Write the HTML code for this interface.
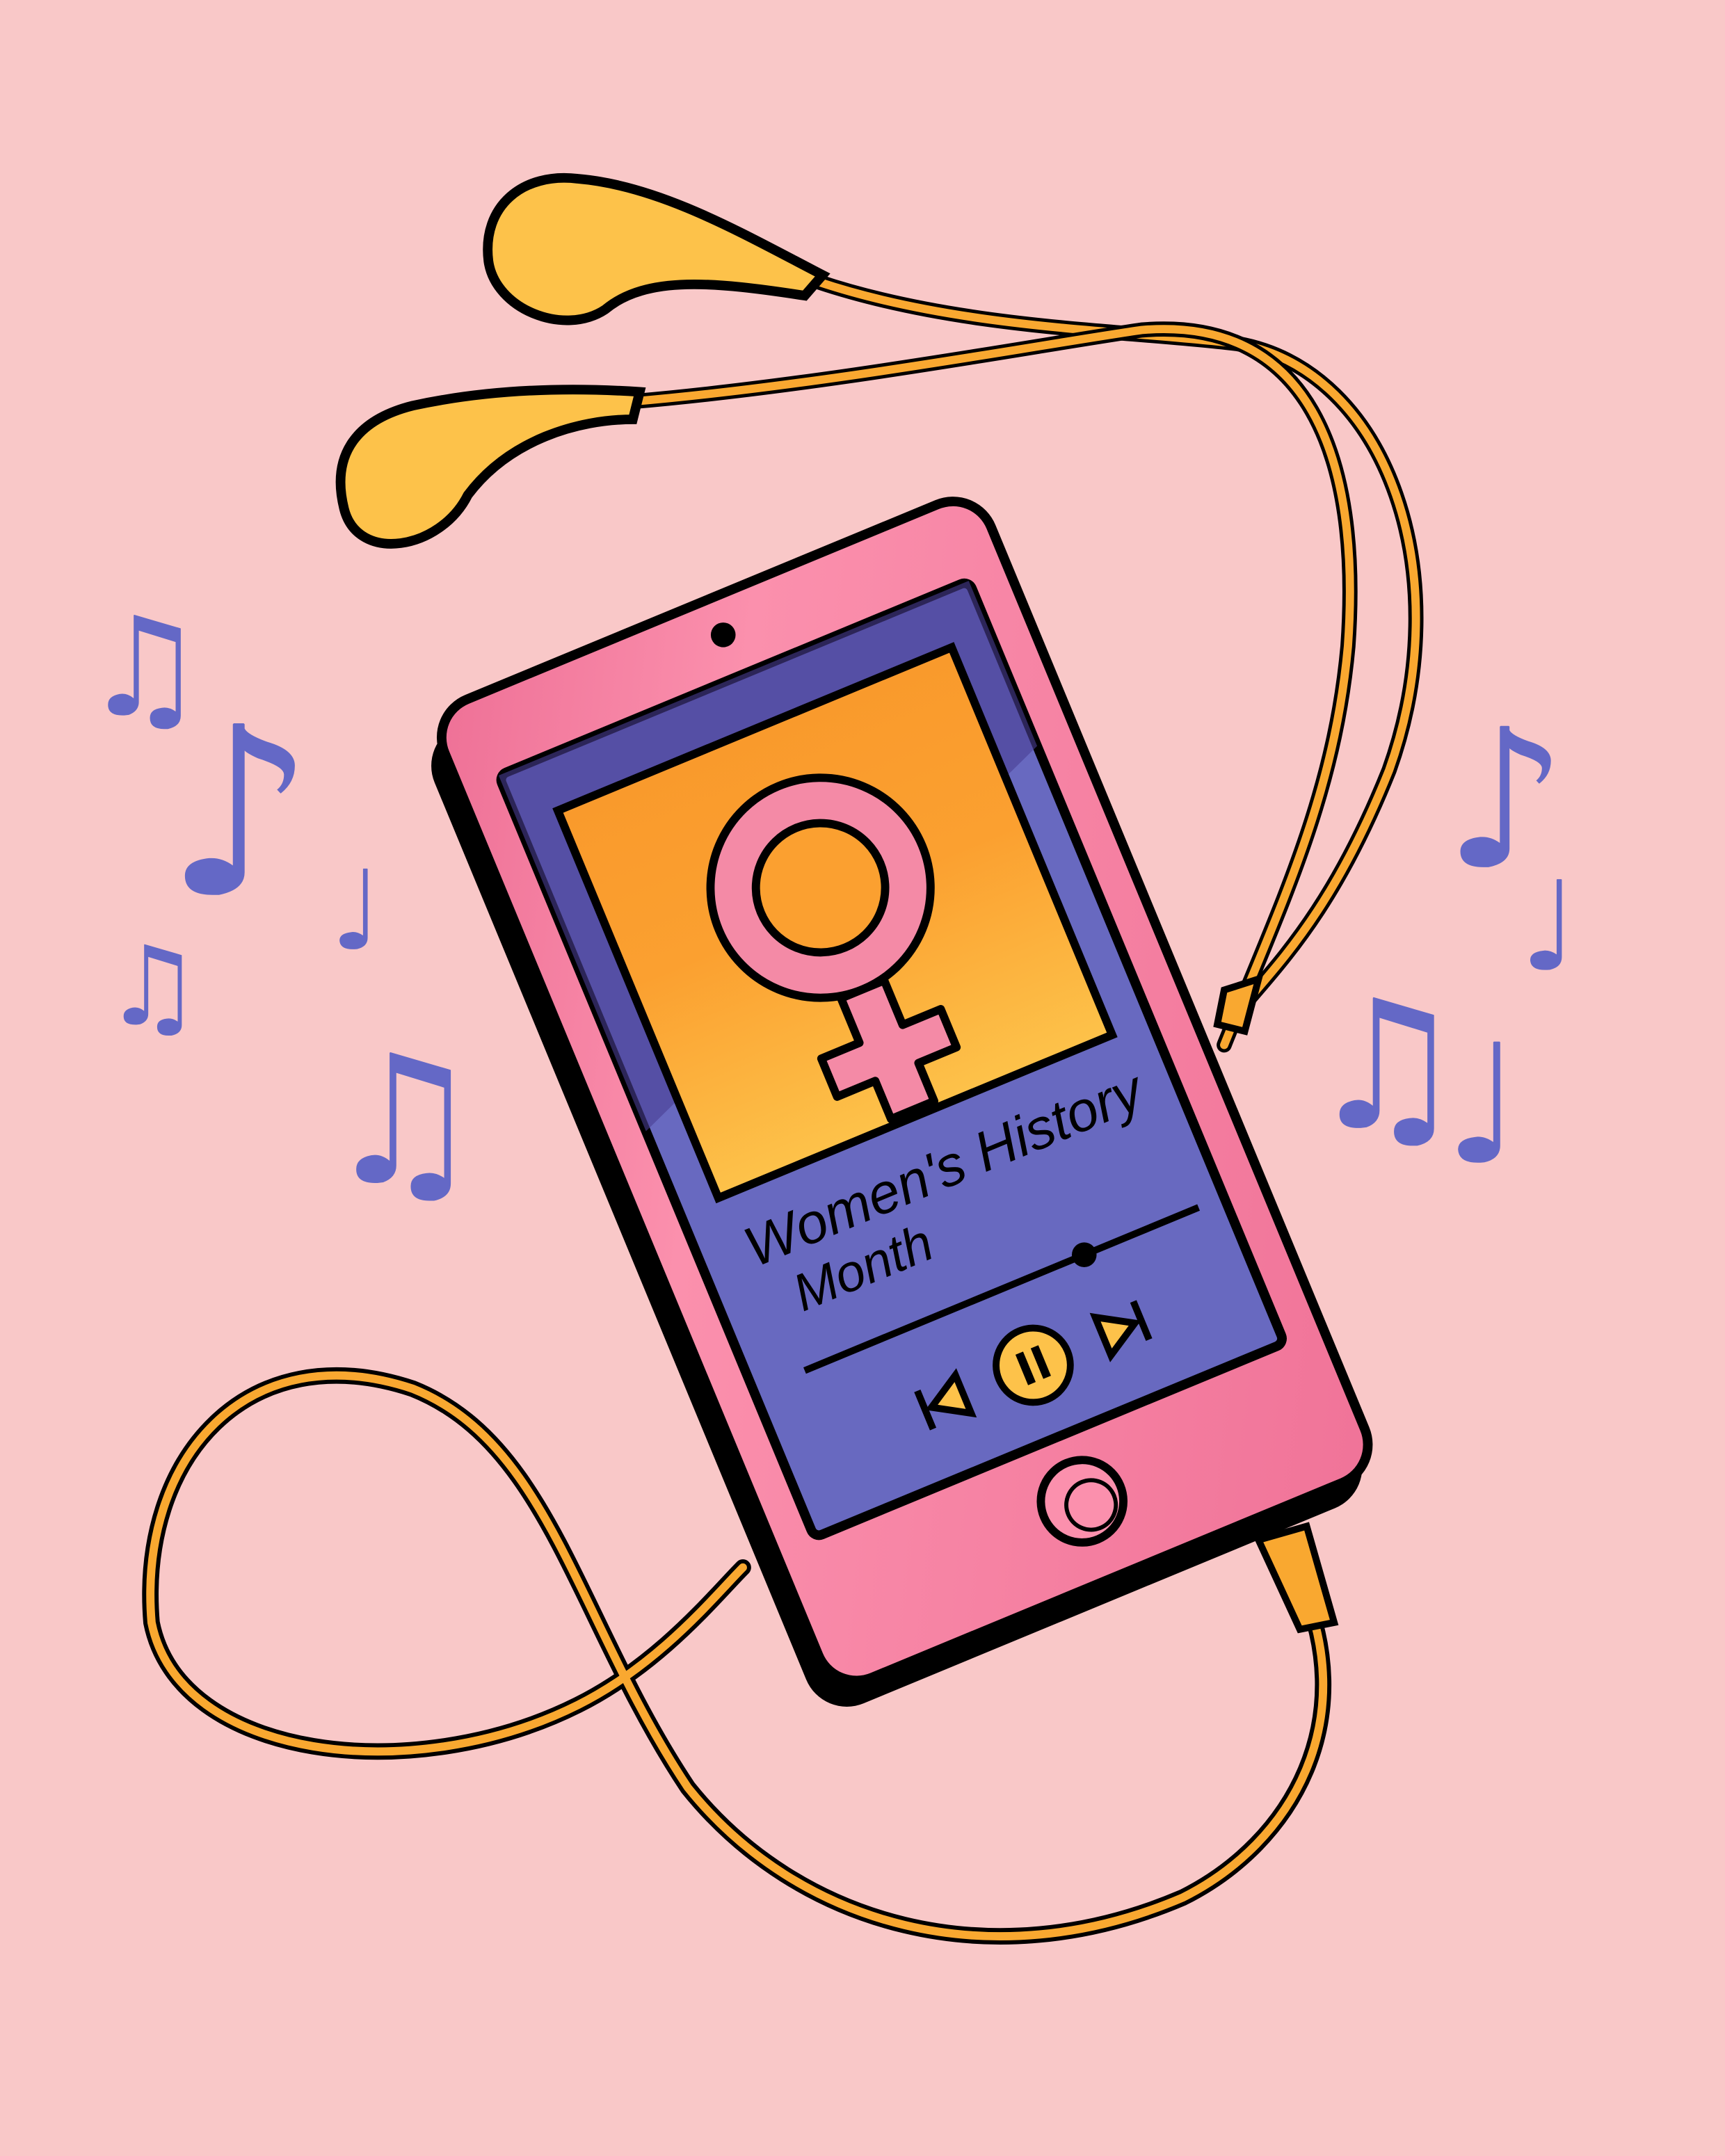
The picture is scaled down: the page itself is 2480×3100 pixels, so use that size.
<!DOCTYPE html>
<html><head><meta charset="utf-8"><style>
html,body{margin:0;padding:0;background:#f9c8c8}
svg{display:block}
</style></head><body>
<svg width="2480" height="3100" viewBox="0 0 1254 1568" xmlns="http://www.w3.org/2000/svg">
<defs>
<linearGradient id="art" x1="0" y1="0" x2="0" y2="1">
<stop offset="0" stop-color="#f99a2c"/><stop offset="0.45" stop-color="#fba030"/><stop offset="1" stop-color="#fdc24a"/></linearGradient>
<linearGradient id="ph" x1="0" y1="0" x2="1" y2="1">
<stop offset="0" stop-color="#ee7096"/><stop offset="0.3" stop-color="#fb90ad"/><stop offset="1" stop-color="#f07398"/></linearGradient>
</defs>
<rect width="1254" height="1568" fill="#f9c8c8"/>
<g fill="none" stroke-linecap="round">
<path d="M595 205 C700 240 820 240 900 250 C1010 270 1060 420 1010 560 C970 660 930 700 905 730" stroke="#000" stroke-width="11"/>
<path d="M595 205 C700 240 820 240 900 250 C1010 270 1060 420 1010 560 C970 660 930 700 905 730" stroke="#f9a830" stroke-width="6"/>
<path d="M460 292 C600 280 760 250 830 240 C950 230 990 330 980 470 C970 580 930 660 890 760" stroke="#000" stroke-width="11"/>
<path d="M460 292 C600 280 760 250 830 240 C950 230 990 330 980 470 C970 580 930 660 890 760" stroke="#f9a830" stroke-width="6"/>
<path d="M945 1150 C990 1250 940 1340 860 1380 C720 1440 580 1400 500 1300 C420 1180 400 1050 300 1010 C180 970 100 1060 110 1180 C130 1280 300 1300 420 1240 C480 1210 520 1160 540 1140" stroke="#000" stroke-width="12"/>
<path d="M945 1150 C990 1250 940 1340 860 1380 C720 1440 580 1400 500 1300 C420 1180 400 1050 300 1010 C180 970 100 1060 110 1180 C130 1280 300 1300 420 1240 C480 1210 520 1160 540 1140" stroke="#f9a830" stroke-width="6"/>
</g>
<path d="M915 1120 L950 1110 L970 1180 L945 1185 Z" fill="#f9a830" stroke="#000" stroke-width="5"/>
<path d="M890 720 L915 712 L905 750 L885 745 Z" fill="#f9a830" stroke="#000" stroke-width="5"/>
<path d="M598 200 L585 215 C520 205 470 200 440 225 C410 245 360 225 355 190 C350 150 380 125 420 130 C480 135 540 170 598 200 Z" fill="#fdc24a" stroke="#000" stroke-width="7"/>
<path d="M465 285 L460 305 C420 305 370 320 340 360 C320 400 260 410 250 370 C240 330 260 305 300 295 C360 282 420 282 465 285 Z" fill="#fdc24a" stroke="#000" stroke-width="7"/>
<g transform="translate(655,800) rotate(-22.5)">
<rect x="-225" y="-375" width="435" height="770" rx="32" fill="#000"/>
<rect x="-210" y="-390" width="430" height="770" rx="30" fill="url(#ph)" stroke="#000" stroke-width="7"/>
<rect x="-180" y="-330" width="370" height="600" rx="6" fill="#6869c0" stroke="#000" stroke-width="7"/>
<path d="M-180 -330 L190 -330 L190 -200 L-180 -50 Z" fill="#4a3e92" opacity="0.6"/>
<rect x="-150" y="-290" width="310" height="305" fill="url(#art)" stroke="#000" stroke-width="6"/>
<circle cx="10" cy="-362" r="9" fill="#000"/>
<circle cx="10" cy="320" r="30" fill="#fb90ad" stroke="#000" stroke-width="6"/>
<circle cx="15" cy="325" r="18" fill="none" stroke="#000" stroke-width="3"/>
<g stroke="#000" stroke-width="6" stroke-linejoin="round">
<circle cx="5" cy="-165" r="80" fill="#f48aa6"/>
<circle cx="5" cy="-165" r="47" fill="#fba030"/>
<path d="M-12 -85 L22 -85 L22 -50 L52 -50 L52 -20 L22 -20 L22 10 L-12 10 L-12 -20 L-42 -20 L-42 -50 L-12 -50 Z" fill="#f48aa6"/>
</g>
<text x="-145" y="72" font-family="Liberation Sans, sans-serif" font-size="41" font-style="italic">Women's History</text>
<text x="-125" y="115" font-family="Liberation Sans, sans-serif" font-size="38" font-style="italic">Month</text>
<line x1="-140" y1="155" x2="170" y2="155" stroke="#000" stroke-width="5"/>
<circle cx="80" cy="155" r="9" fill="#000"/>
<circle cx="15" cy="215" r="27" fill="#fdc24a" stroke="#000" stroke-width="5"/>
<rect x="6" y="203" width="6" height="24" fill="#000"/><rect x="18" y="203" width="6" height="24" fill="#000"/>
<path d="M-70 200 L-70 230 M-65 215 L-40 200 L-40 230 Z" fill="#fdc24a" stroke="#000" stroke-width="5"/>
<path d="M70 200 L95 215 L70 230 Z M100 200 L100 230" fill="#fdc24a" stroke="#000" stroke-width="5"/>
</g>
<g fill="#6468c6" font-family="DejaVu Sans, sans-serif">
<text x="60" y="520" font-size="100">♫</text>
<text x="120" y="650" font-size="170">♪</text>
<text x="240" y="690" font-size="80">♩</text>
<text x="75" y="745" font-size="80">♫</text>
<text x="235" y="860" font-size="130">♫</text>
<text x="1050" y="630" font-size="140">♪</text>
<text x="1105" y="705" font-size="90">♩</text>
<text x="950" y="820" font-size="130">♫</text>
<text x="1050" y="845" font-size="120">♩</text>
</g>
</svg>
</body></html>
